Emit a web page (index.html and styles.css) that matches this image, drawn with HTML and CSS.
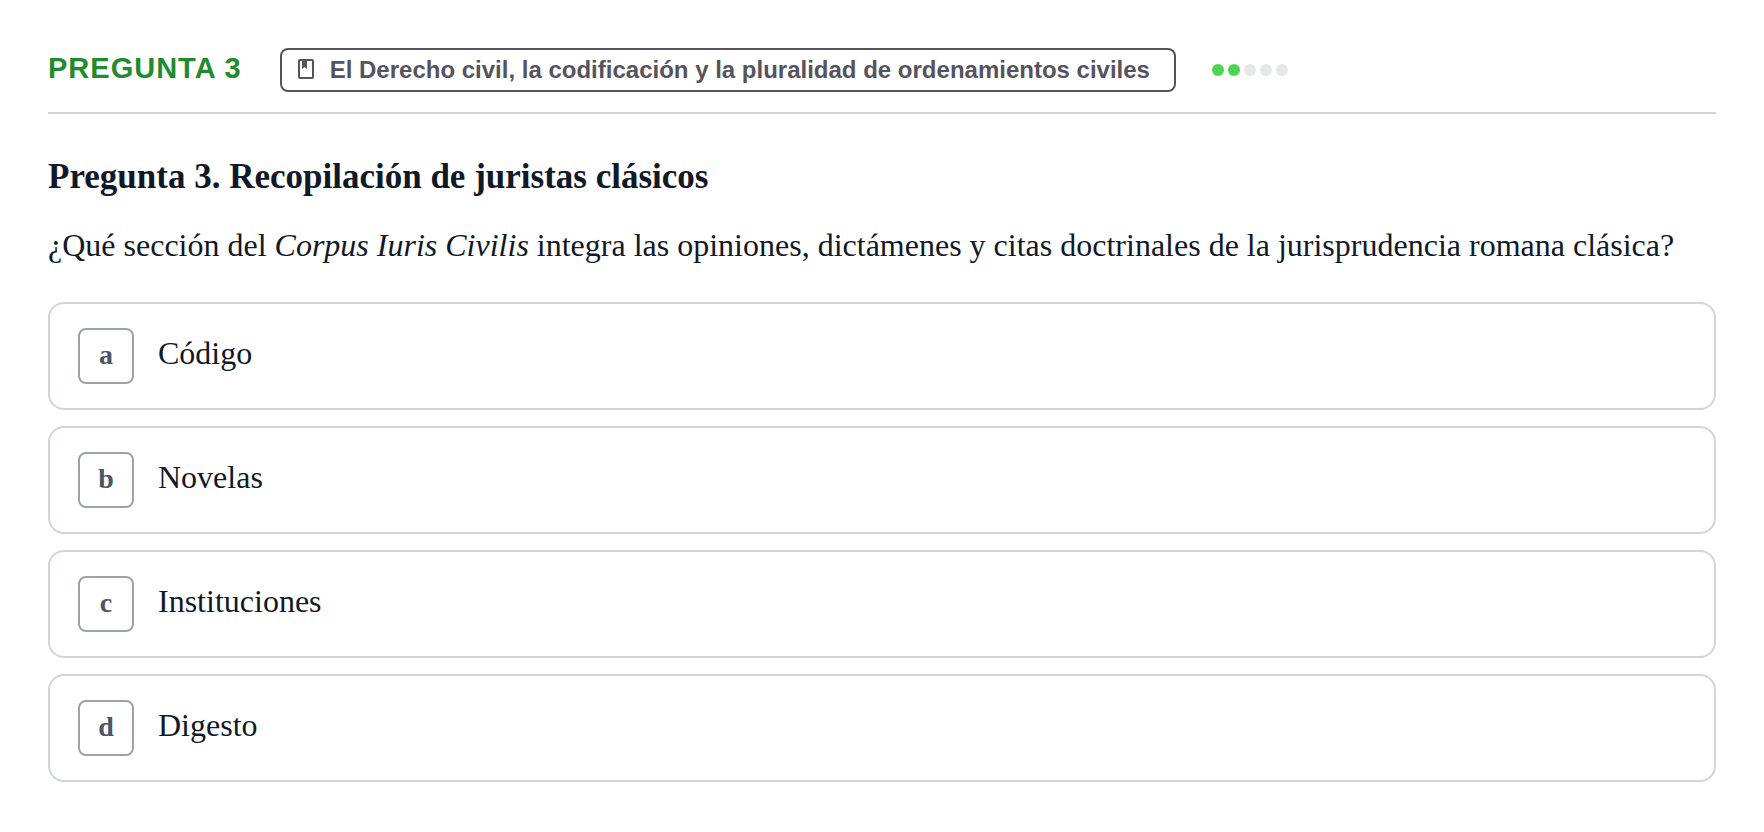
FILE: index.html
```html
<!DOCTYPE html>
<html lang="es">

<head>
  <meta charset="UTF-8">
  <meta name="viewport" content="width=device-width, initial-scale=1">
  <title>Pregunta 3</title>
  <link rel="stylesheet" href="styles.css">
</head>

<body>
  <main class="question">
    <header class="question-header">
      <span class="number">Pregunta 3</span>
      <span class="topic">
        <svg class="topic-icon" viewBox="0 0 24 24" aria-hidden="true">
          <rect x="5" y="2" width="14" height="18" rx="1" fill="none" stroke="currentColor" stroke-width="2" />
          <path d="M8 2h5v9l-2.500-2L8 11z" fill="currentColor" />
        </svg>
        El Derecho civil, la codificación y la pluralidad de ordenamientos civiles
      </span>
      <span class="difficulty" role="img" aria-label="Dificultad 2 de 5">
        <span class="dot on"></span>
        <span class="dot on"></span>
        <span class="dot"></span>
        <span class="dot"></span>
        <span class="dot"></span>
      </span>
    </header>

    <h1>Pregunta 3. Recopilación de juristas clásicos</h1>
    <p class="statement">¿Qué sección del <em>Corpus Iuris Civilis</em> integra las opiniones, dictámenes y citas doctrinales de la jurisprudencia romana clásica?</p>

    <div class="options">
      <button type="button" class="option">
        <span class="letter">a</span>
        <span class="answer">Código</span>
      </button>
      <button type="button" class="option">
        <span class="letter">b</span>
        <span class="answer">Novelas</span>
      </button>
      <button type="button" class="option">
        <span class="letter">c</span>
        <span class="answer">Instituciones</span>
      </button>
      <button type="button" class="option">
        <span class="letter">d</span>
        <span class="answer">Digesto</span>
      </button>
    </div>
  </main>
</body>

</html>
```
FILE: styles.css
```css
* {
  box-sizing: border-box;
}

body {
  margin: 0;
  background: #fff;
  color: #111827;
  font-family: "Liberation Serif", "Times New Roman", serif;
  font-size: 32px;
}

.question {
  padding: 48px;
}

.question-header {
  display: flex;
  align-items: center;
  padding-bottom: 20px;
  border-bottom: 2px solid #d1d5db;
  margin-bottom: 36px;
  font-family: "Liberation Sans", Arial, sans-serif;
  font-weight: bold;
}

.number {
  margin-right: 38px;
  padding-bottom: 4px;
  color: #228b2e;
  font-size: 29px;
  line-height: 40px;
  letter-spacing: 1px;
  text-transform: uppercase;
}

.topic {
  display: flex;
  align-items: center;
  gap: 12px;
  margin-right: 36px;
  padding: 6px 24px 6px 12px;
  border: 2px solid #565360;
  border-radius: 8px;
  color: #565360;
  font-size: 24px;
  line-height: 28px;
}

.topic-icon {
  width: 24px;
  height: 24px;
}

.difficulty {
  display: flex;
  gap: 4px;
}

.dot {
  width: 12px;
  height: 12px;
  border-radius: 50%;
  background: #e5e7eb;
}

.dot.on {
  background: #4cd551;
}

h1 {
  margin: 0 0 14px;
  font-size: 35px;
  line-height: 54px;
}

.statement {
  margin: 0 0 30px;
  line-height: 54px;
}

.options {
  display: flex;
  flex-direction: column;
  gap: 16px;
}

.option {
  display: flex;
  align-items: flex-start;
  gap: 24px;
  padding: 24px 28px;
  border: 2px solid #d1d5db;
  border-radius: 16px;
  background: #fff;
  color: inherit;
  font: inherit;
  text-align: left;
  cursor: pointer;
}

.option:hover {
  border-color: #9ca3af;
}

.letter {
  display: flex;
  flex-shrink: 0;
  align-items: center;
  justify-content: center;
  width: 56px;
  height: 56px;
  padding-bottom: 2px;
  border: 2px solid #9ca3af;
  border-radius: 8px;
  color: #4b5563;
  font-size: 28px;
  font-weight: bold;
}

.answer {
  line-height: 50px;
}
```
